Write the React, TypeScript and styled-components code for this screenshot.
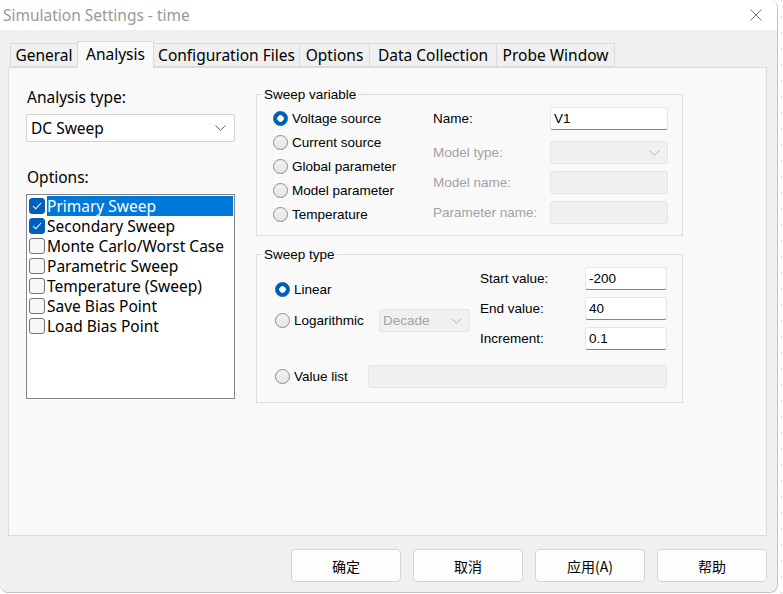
import React from "react";
import styled, { createGlobalStyle } from "styled-components";

const Global = createGlobalStyle`
  html, body { margin: 0; padding: 0; background: #ffffff; overflow: hidden; }
  * { box-sizing: border-box; }
`;

const Screen = styled.div`
  display: flex;
  width: 783px;
  height: 594px;
  background: #ffffff;
`;

const Window = styled.div`
  width: 778px;
  height: 593px;
  display: flex;
  flex-direction: column;
  background: #f0f0f0;
  border-right: 1px solid #c4c4c4;
  border-bottom: 1px solid #c4c4c4;
  border-radius: 0 8px 8px 8px;
  overflow: hidden;
  font-family: "Noto Sans", "Liberation Sans", sans-serif;
`;

const DotStrip = styled.div`
  flex: 1;
  background-image: repeating-linear-gradient(to bottom, #b8b8b8 0 1px, transparent 1px 16px);
  background-size: 1px 100%;
  background-position: 3px 0;
  background-repeat: no-repeat;
`;

const TitleBar = styled.div`
  height: 30px;
  flex: none;
  background: #ffffff;
  display: flex;
  align-items: center;
  justify-content: space-between;
  padding: 0 15px 0 3px;
`;

const Title = styled.span`
  font-size: 15.5px;
  color: #9a9a9a;
  line-height: 20px;
`;

const CloseBtn = styled.span`
  display: flex;
  width: 12px;
  height: 12px;
`;

const Body = styled.div`
  flex: 1;
  display: flex;
  flex-direction: column;
  padding: 11px 10px 10px 8px;
  min-height: 0;
`;

const TabStrip = styled.div`
  display: flex;
  align-items: flex-end;
  height: 26px;
  padding-left: 2px;
  position: relative;
  z-index: 1;
`;

const Tab = styled.div<{ $active?: boolean; $w: number }>`
  width: ${(p) => p.$w}px;
  height: ${(p) => (p.$active ? "27px" : "24px")};
  margin-bottom: ${(p) => (p.$active ? "-1px" : "0")};
  padding-bottom: ${(p) => (p.$active ? "2px" : "0")};
  display: flex;
  align-items: center;
  justify-content: center;
  font-size: 15.5px;
  color: #000;
  background: ${(p) => (p.$active ? "#f9f9f9" : "#f0f0f0")};
  border: 1px solid #dadada;
  border-bottom: ${(p) => (p.$active ? "none" : "1px solid #dadada")};
  margin-right: -1px;
  white-space: nowrap;
`;

const Panel = styled.div`
  flex: 1;
  display: flex;
  gap: 21px;
  background: #f9f9f9;
  border: 1px solid #dcdcdc;
  padding: 19px 0 0 17px;
  min-height: 0;
`;

const LeftCol = styled.div`
  width: 209px;
  display: flex;
  flex-direction: column;
`;

const BigLabel = styled.div<{ $mt?: number }>`
  font-size: 15.5px;
  line-height: 20px;
  color: #000;
  margin-top: ${(p) => p.$mt ?? 0}px;
  padding-left: 1px;
`;

const BigSelect = styled.div`
  margin-top: 7px;
  height: 28px;
  background: #ffffff;
  border: 1px solid #d2d2d2;
  border-radius: 3px;
  display: flex;
  align-items: center;
  justify-content: space-between;
  padding: 0 8px 0 4px;
  font-size: 15.5px;
  color: #000;
`;

const ListBox = styled.div`
  margin-top: 7px;
  height: 205px;
  background: #ffffff;
  border: 1px solid #84848f;
  padding: 1px;
`;

const ListItem = styled.div`
  height: 20px;
  display: flex;
  align-items: center;
  padding-left: 1px;
`;

const CheckBox = styled.span<{ $checked?: boolean }>`
  width: 16px;
  height: 16px;
  flex: none;
  border-radius: 3px;
  display: flex;
  align-items: center;
  justify-content: center;
  background: ${(p) => (p.$checked ? "#005fb8" : "#f7f7f7")};
  border: 1px solid ${(p) => (p.$checked ? "#005fb8" : "#727272")};
`;

const ItemText = styled.span<{ $selected?: boolean }>`
  flex: 1;
  margin-left: 2px;
  height: 20px;
  line-height: 20px;
  font-size: 15.5px;
  color: ${(p) => (p.$selected ? "#ffffff" : "#000000")};
  background: ${(p) => (p.$selected ? "#0078d7" : "transparent")};
  white-space: nowrap;
`;

const RightCol = styled.div`
  width: 427px;
  display: flex;
  flex-direction: column;
  gap: 11px;
`;

const Group = styled.fieldset<{ $pt: number; $pl: number; $pb: number }>`
  margin: 0;
  min-width: 0;
  border: 1px solid #dcdcdc;
  padding: ${(p) => `${p.$pt}px 14px ${p.$pb}px ${p.$pl}px`};
  font-family: "Liberation Sans", Arial, sans-serif;
  font-size: 13.5px;
  color: #000;
`;

const Legend = styled.legend<{ $ml: number }>`
  font-size: 13.5px;
  line-height: 15px;
  padding: 0 2px;
  margin-left: ${(p) => p.$ml}px;
  color: #000;
`;

const Row = styled.div`
  display: flex;
`;

const Column = styled.div<{ $w?: number }>`
  display: flex;
  flex-direction: column;
  width: ${(p) => (p.$w ? `${p.$w}px` : "auto")};
  flex: none;
`;

const RadioRow = styled.div<{ $h?: number; $mt?: number }>`
  height: ${(p) => p.$h ?? 24}px;
  margin-top: ${(p) => p.$mt ?? 0}px;
  display: flex;
  align-items: center;
  white-space: nowrap;
`;

const Radio = styled.span<{ $checked?: boolean }>`
  width: 15px;
  height: 15px;
  flex: none;
  border-radius: 50%;
  margin-right: 4px;
  background: ${(p) =>
    p.$checked
      ? "radial-gradient(circle, #ffffff 0 3px, #005fb8 3.5px)"
      : "linear-gradient(#f2f2f2, #e6e6e6)"};
  border: 1px solid ${(p) => (p.$checked ? "#005fb8" : "#8c8c8c")};
`;

const FieldRow = styled.div<{ $mt?: number }>`
  height: 23px;
  margin-top: ${(p) => p.$mt ?? 0}px;
  display: flex;
  align-items: center;
`;

const FieldLabel = styled.span<{ $w: number; $disabled?: boolean }>`
  width: ${(p) => p.$w}px;
  flex: none;
  color: ${(p) => (p.$disabled ? "#a3a3a3" : "#000")};
  white-space: nowrap;
`;

const Input = styled.div<{ $w: number; $disabled?: boolean }>`
  width: ${(p) => p.$w}px;
  height: 23px;
  flex: none;
  border-radius: 3px;
  display: flex;
  align-items: center;
  justify-content: space-between;
  padding: 0 7px 0 3px;
  background: ${(p) => (p.$disabled ? "#f0f0f0" : "#ffffff")};
  border: 1px solid ${(p) => (p.$disabled ? "#e4e4e4" : "#e6e6e6")};
  border-bottom: 1px solid ${(p) => (p.$disabled ? "#e4e4e4" : "#858585")};
  color: ${(p) => (p.$disabled ? "#a3a3a3" : "#000")};
  font-size: 13.5px;
`;

const ButtonRow = styled.div`
  display: flex;
  justify-content: flex-end;
  gap: 12px;
  margin-top: 13px;
  height: 33px;
  flex: none;
`;

const Button = styled.button`
  width: 110px;
  height: 33px;
  background: #fdfdfd;
  border: 1px solid #d3d3d3;
  border-radius: 4px;
  font-family: "Noto Sans CJK SC", "Noto Sans", sans-serif;
  font-size: 14px;
  color: #000;
  padding: 0;
`;

const Chevron = ({ color = "#606060" }: { color?: string }) => (
  <svg width="11" height="6" viewBox="0 0 11 6">
    <path d="M0.5 0.5 L5.5 5.2 L10.5 0.5" fill="none" stroke={color} strokeWidth="1" />
  </svg>
);

const Check = () => (
  <svg width="10" height="8" viewBox="0 0 10 8">
    <path d="M1 4.2 L3.8 6.8 L9 1" fill="none" stroke="#ffffff" strokeWidth="1.1" />
  </svg>
);

const options = [
  { label: "Primary Sweep", checked: true, selected: true },
  { label: "Secondary Sweep", checked: true },
  { label: "Monte Carlo/Worst Case" },
  { label: "Parametric Sweep" },
  { label: "Temperature (Sweep)" },
  { label: "Save Bias Point" },
  { label: "Load Bias Point" },
];

const tabs = [
  { label: "General", w: 68 },
  { label: "Analysis", w: 77 },
  { label: "Configuration Files", w: 147 },
  { label: "Options", w: 71 },
  { label: "Data Collection", w: 128 },
  { label: "Probe Window", w: 119 },
];

export default function App() {
  return (
    <Screen>
      <Global />
      <Window>
        <TitleBar>
          <Title>Simulation Settings - time</Title>
          <CloseBtn>
            <svg width="12" height="12" viewBox="0 0 12 12">
              <path d="M0.5 0.5 L11.5 11.5 M11.5 0.5 L0.5 11.5" stroke="#7a7a7a" strokeWidth="1" />
            </svg>
          </CloseBtn>
        </TitleBar>
        <Body>
          <TabStrip>
            {tabs.map((t) => (
              <Tab key={t.label} $w={t.w} $active={t.label === "Analysis"}>
                {t.label}
              </Tab>
            ))}
          </TabStrip>
          <Panel>
            <LeftCol>
              <BigLabel>Analysis type:</BigLabel>
              <BigSelect>
                <span>DC Sweep</span>
                <Chevron />
              </BigSelect>
              <BigLabel $mt={25}>Options:</BigLabel>
              <ListBox>
                {options.map((o) => (
                  <ListItem key={o.label}>
                    <CheckBox $checked={o.checked}>{o.checked && <Check />}</CheckBox>
                    <ItemText $selected={o.selected}>{o.label}</ItemText>
                  </ListItem>
                ))}
              </ListBox>
            </LeftCol>
            <RightCol>
              <Group $pt={4} $pl={16} $pb={9}>
                <Legend $ml={-11}>Sweep variable</Legend>
                <Row>
                  <Column $w={160}>
                    <RadioRow>
                      <Radio $checked />
                      Voltage source
                    </RadioRow>
                    <RadioRow>
                      <Radio />
                      Current source
                    </RadioRow>
                    <RadioRow>
                      <Radio />
                      Global parameter
                    </RadioRow>
                    <RadioRow>
                      <Radio />
                      Model parameter
                    </RadioRow>
                    <RadioRow>
                      <Radio />
                      Temperature
                    </RadioRow>
                  </Column>
                  <Column>
                    <FieldRow $mt={1}>
                      <FieldLabel $w={117}>Name:</FieldLabel>
                      <Input $w={118}>V1</Input>
                    </FieldRow>
                    <FieldRow $mt={11}>
                      <FieldLabel $w={117} $disabled>
                        Model type:
                      </FieldLabel>
                      <Input $w={118} $disabled>
                        <span />
                        <Chevron color="#b5b5b5" />
                      </Input>
                    </FieldRow>
                    <FieldRow $mt={7}>
                      <FieldLabel $w={117} $disabled>
                        Model name:
                      </FieldLabel>
                      <Input $w={118} $disabled />
                    </FieldRow>
                    <FieldRow $mt={7}>
                      <FieldLabel $w={117} $disabled>
                        Parameter name:
                      </FieldLabel>
                      <Input $w={118} $disabled />
                    </FieldRow>
                  </Column>
                </Row>
              </Group>
              <Group $pt={5} $pl={18} $pb={14}>
                <Legend $ml={-13}>Sweep type</Legend>
                <Row>
                  <Column $w={205}>
                    <RadioRow $h={22} $mt={11}>
                      <Radio $checked />
                      Linear
                    </RadioRow>
                    <RadioRow $h={23} $mt={9}>
                      <Radio />
                      <FieldLabel $w={85}>Logarithmic</FieldLabel>
                      <Input $w={91} $disabled>
                        <span>Decade</span>
                        <Chevron color="#b5b5b5" />
                      </Input>
                    </RadioRow>
                  </Column>
                  <Column>
                    <FieldRow>
                      <FieldLabel $w={105}>Start value:</FieldLabel>
                      <Input $w={82}>-200</Input>
                    </FieldRow>
                    <FieldRow $mt={7}>
                      <FieldLabel $w={105}>End value:</FieldLabel>
                      <Input $w={82}>40</Input>
                    </FieldRow>
                    <FieldRow $mt={7}>
                      <FieldLabel $w={105}>Increment:</FieldLabel>
                      <Input $w={82}>0.1</Input>
                    </FieldRow>
                  </Column>
                </Row>
                <RadioRow $h={23} $mt={15}>
                  <Radio />
                  <FieldLabel $w={74}>Value list</FieldLabel>
                  <Input $w={299} $disabled />
                </RadioRow>
              </Group>
            </RightCol>
          </Panel>
          <ButtonRow>
            <Button>确定</Button>
            <Button>取消</Button>
            <Button>应用(A)</Button>
            <Button>帮助</Button>
          </ButtonRow>
        </Body>
      </Window>
      <DotStrip />
    </Screen>
  );
}
